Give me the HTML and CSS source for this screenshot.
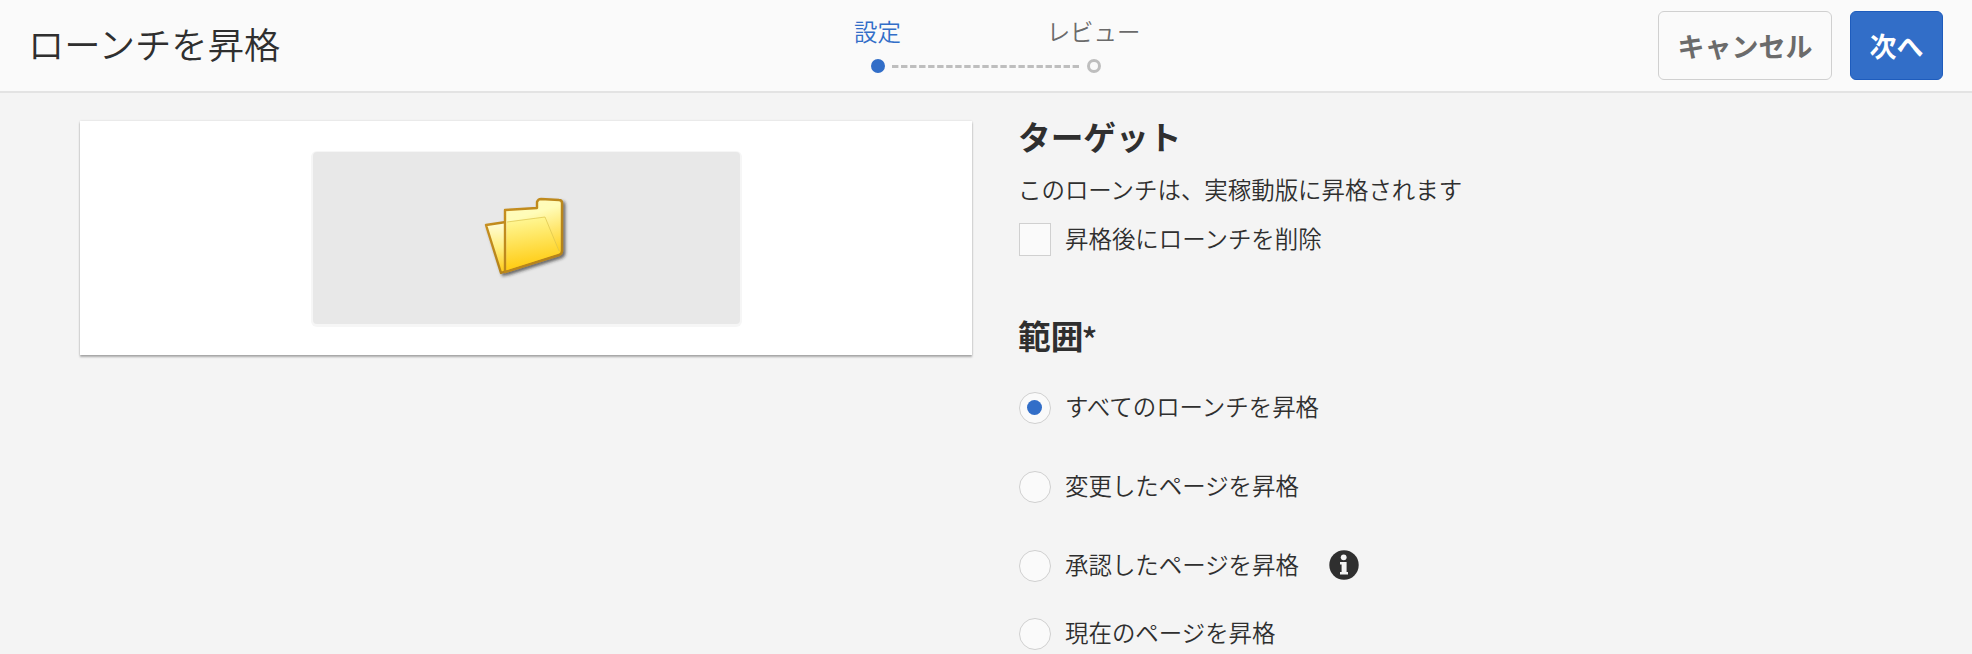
FILE: index.html
```html
<!DOCTYPE html>
<html lang="ja">
<head>
<meta charset="utf-8">
<title>ローンチを昇格</title>
<link rel="stylesheet" href="styles.css">
</head>
<body>
<header class="header">
  <h1 class="title">ローンチを昇格</h1>
  <div class="steps">
    <div class="step step-active"><span class="step-label">設定</span><span class="dot"></span></div>
    <svg class="step-line" width="188" height="3" viewBox="0 0 188 3"><path d="M0 1.5H187" stroke="#bebebe" stroke-width="3" stroke-dasharray="6.4 2.63"/></svg>
    <div class="step"><span class="step-label">レビュー</span><span class="dot"></span></div>
  </div>
  <div class="actions">
    <button class="button cancel" type="button">キャンセル</button>
    <button class="button primary" type="button">次へ</button>
  </div>
</header>
<main class="content">
  <section class="card">
    <div class="thumb">
      <svg class="folder" width="90" height="90" viewBox="0 0 90 90">
        <defs>
          <linearGradient id="front" x1="0" y1="0" x2=".25" y2="1"><stop offset="0" stop-color="#fffbc0"/><stop offset=".3" stop-color="#fffcb8"/><stop offset=".85" stop-color="#ffd42c"/><stop offset="1" stop-color="#ffc80c"/></linearGradient>
          <linearGradient id="back" x1="0" y1="0" x2="0" y2="1"><stop offset="0" stop-color="#fffddc"/><stop offset=".5" stop-color="#ffee80"/><stop offset="1" stop-color="#ffc913"/></linearGradient>
          <linearGradient id="flap" x1="0" y1="0" x2="0" y2="1"><stop offset="0" stop-color="#fff684"/><stop offset="1" stop-color="#ffca10"/></linearGradient>
          <linearGradient id="edge" x1="0" y1="0" x2="1" y2="1"><stop offset="0" stop-color="#c78f20"/><stop offset="1" stop-color="#b0801c"/></linearGradient>
          <filter id="shade" x="-20%" y="-20%" width="140%" height="140%"><feDropShadow dx="2.2" dy="2.2" stdDeviation="1.5" flood-color="#222" flood-opacity=".65"/></filter>
        </defs>
        <g filter="url(#shade)" stroke-linejoin="round" stroke-width="2.4">
          <path d="M5 34L25 31V80L20 82Z" fill="url(#back)" stroke="url(#edge)"/>
          <path d="M24 19L56 17V11Q57 8 60 8L78 9Q81 9 81 12V60Q81 63 78 64L24 81Z" fill="url(#front)" stroke="url(#edge)"/>
        </g>
        <path d="M26 31L64 26L79 62L26 79Z" fill="url(#flap)" opacity=".6"/>
        <path d="M26 31L64 26L78 60" fill="none" stroke="#dcc34c" stroke-width="1" opacity=".7"/>
      </svg>
    </div>
  </section>
  <section class="settings">
    <h2 class="heading">ターゲット</h2>
    <p class="note">このローンチは、実稼動版に昇格されます</p>
    <label class="option check-row"><span class="box"></span><span class="text">昇格後にローンチを削除</span></label>
    <h2 class="heading scope">範囲<span class="star">*</span></h2>
    <div class="options">
      <label class="option"><span class="box radio checked"></span><span class="text">すべてのローンチを昇格</span></label>
      <label class="option"><span class="box radio"></span><span class="text">変更したページを昇格</span></label>
      <label class="option"><span class="box radio"></span><span class="text">承認したページを昇格</span>
        <svg class="info" width="30" height="30" viewBox="0 0 30 30"><circle cx="15" cy="15" r="14.7" fill="#2f2f2f"/><circle cx="14.7" cy="7.3" r="2.9" fill="#f4f4f4"/><path d="M11 12H17.6V22H19V24.6H11V22H12.6V14.6H11Z" fill="#f4f4f4"/></svg>
      </label>
      <label class="option last"><span class="box radio"></span><span class="text">現在のページを昇格</span></label>
    </div>
  </section>
</main>
</body>
</html>
```
FILE: styles.css
```css
* { box-sizing: border-box; }
body {
  margin: 0;
  height: 654px;
  overflow: hidden;
  background: #f4f4f4;
  color: #2f2f2f;
  font: 350 23.45px/32px "Noto Sans CJK JP DemiLight", "Noto Sans CJK JP", sans-serif;
}
.header {
  display: grid;
  grid-template-columns: 1fr auto 1fr;
  height: 93px;
  padding: 0 29px 0 28px;
  background: #fafafa;
  border-bottom: 2px solid #e3e3e3;
}
.title { margin: 20px 0 0; font-size: 36.3px; line-height: 46px; font-weight: 350; }
.steps { display: flex; justify-content: center; }
.step {
  display: flex;
  flex-direction: column;
  align-items: center;
  width: 14px;
  padding-top: 15px;
  color: #6a6a6a;
  white-space: nowrap;
}
.step-label { line-height: 32px; margin-bottom: 12px; }
.step-active { color: #326ec8; }
.dot { width: 14px; height: 14px; border: 3px solid #bebebe; border-radius: 50%; }
.step-active .dot { background: #326ec8; border-color: #326ec8; }
.step-line { margin: 65px 7px 0 7px; }
.actions { display: flex; justify-content: flex-end; gap: 18px; padding-top: 11px; }
.button {
  height: 69px;
  padding: 0;
  border: 1px solid #d0d0d0;
  border-radius: 6px;
  background: transparent;
  color: #6b6b6b;
  font: 700 27px/40px "Noto Sans CJK JP", sans-serif;
}
.cancel { width: 174px; }
.primary { width: 93px; background: #326ec8; border-color: #1e5cbd; color: #fff; }
.content { display: flex; align-items: flex-start; gap: 47px; padding: 28px 80px 0; }
.card {
  display: flex;
  justify-content: center;
  width: 892px;
  height: 234px;
  padding-top: 31px;
  background: #fff;
  box-shadow: 0 2px 2px rgba(0,0,0,.3), 0 0 2px rgba(0,0,0,.12);
}
.thumb {
  display: flex;
  justify-content: center;
  width: 427px;
  height: 172px;
  padding-top: 39px;
  border-radius: 4px;
  background: #e8e8e8;
  box-shadow: 0 1px 0 2px #f6f6f6;
}
.settings { display: flex; flex-direction: column; }
.heading { margin: -5px 0 0 -1px; font: 700 32.7px/40px "Noto Sans CJK JP", sans-serif; }
.note { margin: 17px 0 0 -1px; }
.option { display: flex; align-items: center; height: 33px; }
.check-row { margin-top: 18px; }
.text { margin-top: -4px; }
.box {
  width: 32px;
  height: 33px;
  margin-right: 14px;
  border: 1px solid #d0d0d0;
  background: #fafafa;
}
.radio { display: flex; align-items: center; justify-content: center; height: 32px; border-radius: 50%; }
.checked::after { content: ""; width: 15px; height: 15px; margin-right: 1px; border-radius: 50%; background: #326ec8; }
.scope { margin-top: 59px; }
.star { margin-left: -2px; font-size: 33px; line-height: 0; font-weight: 500; vertical-align: -4px; }
.options { display: flex; flex-direction: column; gap: 46px; margin-top: 36px; }
.last { margin-top: -11px; }
.info { margin-left: 30px; margin-top: -2px; }
```
